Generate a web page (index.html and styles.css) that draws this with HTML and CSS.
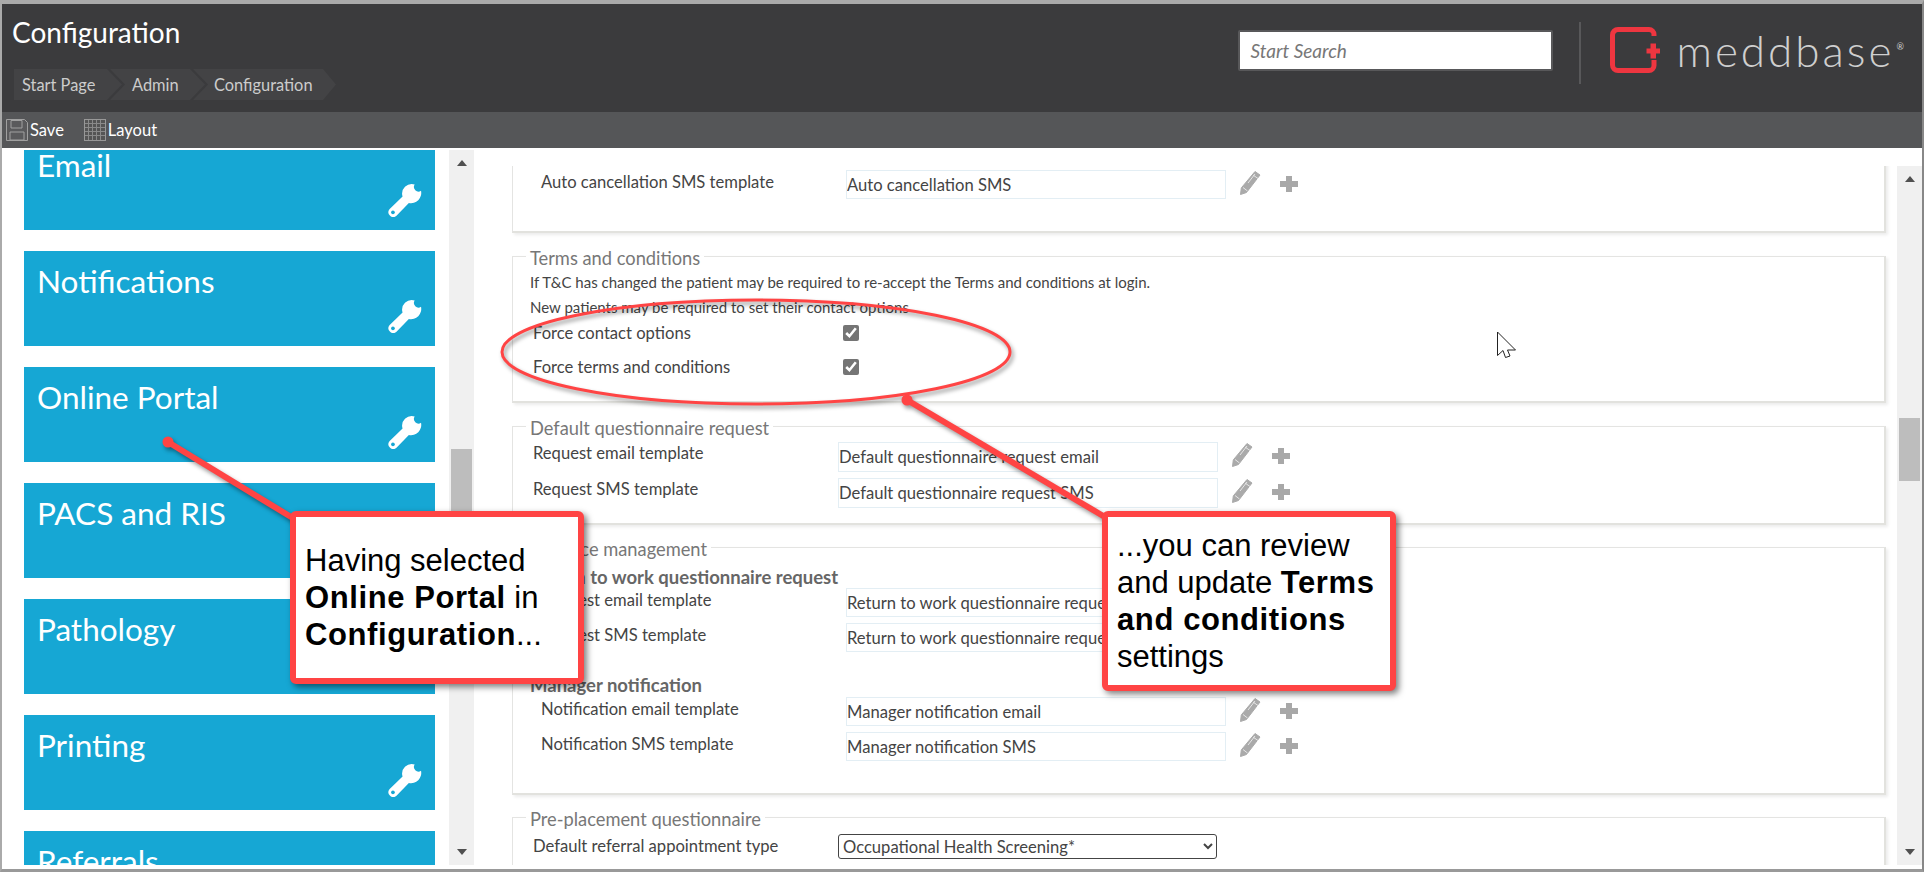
FILE: index.html
```html
<!DOCTYPE html>
<html lang="en">
<head>
<meta charset="utf-8">
<title>Configuration</title>
<link rel="stylesheet" href="styles.css">
</head>
<body>
<svg width="0" height="0" class="defs">
  <symbol id="wrench" viewBox="0 0 35 35">
    <path class="wr-shape" d="M28 1.500A10 10 0 0 0 15.500 14L2 27A5 5 0 0 0 9 34L22 20.500A10.500 10.500 0 0 0 34.500 8A4.700 4.700 0 0 1 28 1.500Z"/>
    <circle class="wr-hole" cx="5.600" cy="30.200" r="1.900"/>
  </symbol>
  <symbol id="pencil" viewBox="0 0 22 25">
    <path class="pn-shape" d="M16 1.500l5 3.500L7.500 22.500 1.500 24.500l.8-6.600z"/>
    <path class="pn-line" d="M14 5l5 3.500M4 17.500l4.500 3.500M9 13l7-9"/>
  </symbol>
  <symbol id="plus" viewBox="0 0 18 16">
    <path class="pl-shape" d="M6 0h6v5h6v6h-6v5H6v-5H0V5h6z"/>
  </symbol>
</svg>

<div class="frame">
  <header class="header">
    <div class="head-left">
      <h1 class="title">Configuration</h1>
      <nav class="crumbs">
        <span class="crumb crumb-first">Start Page</span>
        <span class="crumb crumb-admin">Admin</span>
        <span class="crumb crumb-config">Configuration</span>
      </nav>
    </div>
    <div class="head-right">
      <input class="search" type="text" placeholder="Start Search">
      <div class="divider"></div>
      <div class="logo">
        <svg class="logo-mark" width="50" height="46" viewBox="0 0 50 46">
          <path class="logo-stroke" d="M44 9V7.500A5 5 0 0 0 39 2.500H8A5.500 5.500 0 0 0 2.500 8V38A5.500 5.500 0 0 0 8 43.500H39A5 5 0 0 0 44 38.500V33"/>
          <path class="logo-plus" d="M40.500 16.500h5.500v5h4v5h-4v5h-5.500v-5h-4v-5h4z"/>
        </svg>
        <span class="logo-text">meddbase</span><span class="logo-reg">®</span>
      </div>
    </div>
  </header>

  <div class="toolbar">
    <button class="tool">
      <svg width="22" height="22" viewBox="0 0 22 22">
        <path class="ic-fill" d="M.5.5h18l3 3v18H.5z"/>
        <path class="ic-light" d="M5 1.500h11v7.500H5zM4 13h14v8H4z"/>
      </svg>
      <span>Save</span>
    </button>
    <button class="tool tool-layout">
      <svg width="22" height="22" viewBox="0 0 22 22">
        <rect class="ic-grid" x=".5" y=".5" width="21" height="21"/>
        <path class="ic-gridline" d="M4.500 1v20M8.500 1v20M12.500 1v20M16.500 1v20M1 4.500h20M1 8.500h20M1 12.500h20M1 16.500h20"/>
      </svg>
      <span>Layout</span>
    </button>
  </div>

  <main class="main">
    <section class="tiles-pane">
      <div class="tiles">
        <a class="tile"><span class="tile-name">Email</span><svg class="wrench"><use href="#wrench"/></svg></a>
        <a class="tile"><span class="tile-name">Notifications</span><svg class="wrench"><use href="#wrench"/></svg></a>
        <a class="tile"><span class="tile-name">Online Portal</span><svg class="wrench"><use href="#wrench"/></svg></a>
        <a class="tile"><span class="tile-name">PACS and RIS</span><svg class="wrench"><use href="#wrench"/></svg></a>
        <a class="tile"><span class="tile-name">Pathology</span><svg class="wrench"><use href="#wrench"/></svg></a>
        <a class="tile"><span class="tile-name">Printing</span><svg class="wrench"><use href="#wrench"/></svg></a>
        <a class="tile"><span class="tile-name">Referrals</span><svg class="wrench"><use href="#wrench"/></svg></a>
      </div>
    </section>
    <div class="scrollbar scrollbar-left">
      <i class="arrow-up"></i>
      <i class="thumb thumb-left"></i>
      <i class="arrow-down"></i>
    </div>

    <section class="form-pane">
      <fieldset class="fs fs-first">
        <div class="row row-in">
          <label class="lbl">Auto cancellation SMS template</label>
          <input class="inp" type="text" value="Auto cancellation SMS" readonly>
          <svg class="pencil"><use href="#pencil"/></svg>
          <svg class="plus"><use href="#plus"/></svg>
        </div>
      </fieldset>

      <fieldset class="fs fs-terms">
        <legend class="lgd">Terms and conditions</legend>
        <p class="note">If T&amp;C has changed the patient may be required to re-accept the Terms and conditions at login.</p>
        <p class="note">New patients may be required to set their contact options</p>
        <div class="row row-check">
          <label class="lbl">Force contact options</label>
          <input class="chk" type="checkbox" checked>
        </div>
        <div class="row row-check">
          <label class="lbl">Force terms and conditions</label>
          <input class="chk" type="checkbox" checked>
        </div>
      </fieldset>

      <fieldset class="fs fs-default">
        <legend class="lgd">Default questionnaire request</legend>
        <div class="row row-tall">
          <label class="lbl">Request email template</label>
          <input class="inp" type="text" value="Default questionnaire request email" readonly>
          <svg class="pencil"><use href="#pencil"/></svg>
          <svg class="plus"><use href="#plus"/></svg>
        </div>
        <div class="row row-tall">
          <label class="lbl">Request SMS template</label>
          <input class="inp" type="text" value="Default questionnaire request SMS" readonly>
          <svg class="pencil"><use href="#pencil"/></svg>
          <svg class="plus"><use href="#plus"/></svg>
        </div>
      </fieldset>

      <fieldset class="fs fs-absence">
        <legend class="lgd">Absence management</legend>
        <h4 class="sub">Return to work questionnaire request</h4>
        <div class="row row-in">
          <label class="lbl">Request email template</label>
          <input class="inp" type="text" value="Return to work questionnaire request email" readonly>
          <svg class="pencil"><use href="#pencil"/></svg>
          <svg class="plus"><use href="#plus"/></svg>
        </div>
        <div class="row row-in">
          <label class="lbl">Request SMS template</label>
          <input class="inp" type="text" value="Return to work questionnaire request SMS" readonly>
          <svg class="pencil"><use href="#pencil"/></svg>
          <svg class="plus"><use href="#plus"/></svg>
        </div>
        <h4 class="sub sub-second">Manager notification</h4>
        <div class="row row-in">
          <label class="lbl">Notification email template</label>
          <input class="inp" type="text" value="Manager notification email" readonly>
          <svg class="pencil"><use href="#pencil"/></svg>
          <svg class="plus"><use href="#plus"/></svg>
        </div>
        <div class="row row-in">
          <label class="lbl">Notification SMS template</label>
          <input class="inp" type="text" value="Manager notification SMS" readonly>
          <svg class="pencil"><use href="#pencil"/></svg>
          <svg class="plus"><use href="#plus"/></svg>
        </div>
      </fieldset>

      <fieldset class="fs fs-pre">
        <legend class="lgd">Pre-placement questionnaire</legend>
        <div class="row">
          <label class="lbl">Default referral appointment type</label>
          <select class="sel"><option>Occupational Health Screening*</option></select>
        </div>
      </fieldset>
    </section>

    <div class="scrollbar scrollbar-right">
      <i class="arrow-up"></i>
      <i class="thumb thumb-right"></i>
      <i class="arrow-down"></i>
    </div>
  </main>
</div>

<svg class="marks" width="1924" height="872" viewBox="0 0 1924 872">
  <g class="mark-group">
    <ellipse class="mark-ring" cx="756" cy="352" rx="254" ry="52"/>
    <path class="mark-line" d="M168 442L296 520"/>
    <circle class="mark-dot" cx="168" cy="442" r="5.500"/>
    <path class="mark-line" d="M907 400L1110 520"/>
    <circle class="mark-dot" cx="907" cy="400" r="5.500"/>
  </g>
</svg>
<svg class="cursor" width="20" height="28" viewBox="0 0 20 28">
  <path class="cursor-shape" d="M1.500 1V24.500L7 19.500L9.500 26.500L14 25L11.500 19H19.500Z"/>
</svg>
<div class="callout callout-left">Having selected<br><b>Online Portal</b> in<br><b>Configuration</b>...</div>
<div class="callout callout-right">...you can review<br>and update <b>Terms</b><br><b>and conditions</b><br>settings</div>
</body>
</html>
```

FILE: styles.css
```css
* { box-sizing: border-box; }
html, body { margin: 0; padding: 0; width: 1924px; height: 872px; overflow: hidden; background: #fff; }
body { font-family: Lato, "Open Sans", sans-serif; color: #444; position: relative; }
.defs { position: absolute; }

.frame {
  width: 1924px; height: 872px; display: flex; flex-direction: column;
  border-top: 4px solid #aaa; border-left: 2px solid #aaa; border-right: 2px solid #888;
  border-bottom: 3px solid #999; background: #fff;
}

/* header */
.header { height: 108px; flex: none; background: #3b3b3d; display: flex; justify-content: space-between; }
.head-left { padding: 0 0 0 10px; }
.title { margin: 13px 0 0 0; font-size: 28px; line-height: 30px; font-weight: 400; color: #fff; }
.crumbs { display: flex; margin: 22px 0 0 2px; height: 31px; }
.crumb { display: block; height: 31px; line-height: 31px; font-size: 16.400px; color: #ccc; background: #434345; }
.crumb-first { width: 108px; padding-left: 8px; clip-path: polygon(0 0, 93px 0, 100% 50%, 93px 100%, 0 100%); }
.crumb-admin { width: 95px; margin-left: -12px; padding-left: 22px; clip-path: polygon(0 0, 80px 0, 100% 50%, 80px 100%, 0 100%, 15px 50%); }
.crumb-config { width: 143px; margin-left: -12px; padding-left: 21px; clip-path: polygon(0 0, 130px 0, 100% 50%, 130px 100%, 0 100%, 15px 50%); }
.head-right { display: flex; align-items: flex-start; }
.search {
  width: 315px; height: 41px; margin-top: 26px; border: 2px solid #58585a; border-radius: 2px; padding: 0 10px;
  font: italic 19px Lato, sans-serif; background: #fff; outline: 0;
}
.search::placeholder { color: #777; opacity: 1; }
.divider { width: 2px; height: 62px; background: #58585a; margin: 18px 29px 0 26px; }
.logo { display: flex; align-items: flex-start; margin-top: 23px; margin-right: 18px; }
.logo-mark { display: block; flex: none; }
.logo-stroke { fill: none; stroke: #ee3640; stroke-width: 5; }
.logo-plus { fill: #ee3640; }
.logo-text { font-size: 44px; line-height: 40px; font-weight: 300; color: #cfcfcf; margin: 3px 0 0 16px; letter-spacing: 3px; white-space: nowrap; }
.logo-reg { font-size: 9px; line-height: 12px; color: #cfcfcf; margin: 14px 0 0 2px; }

/* toolbar */
.toolbar { height: 36px; flex: none; background: #555658; display: flex; align-items: center; padding-left: 4px; }
.tool { display: flex; align-items: center; gap: 2px; padding: 0; border: 0; background: none; color: #fff; font: 400 16.500px Lato, sans-serif; }
.tool-layout { margin-left: 20px; }
.ic-fill { fill: #5a5a5c; stroke: #a0a0a0; }
.ic-light { fill: none; stroke: #a0a0a0; }
.ic-grid { fill: #555; stroke: #989898; }
.ic-gridline { fill: none; stroke: #8a8a8a; stroke-width: 1; }

/* main */
.main { flex: 1; min-height: 0; display: flex; align-items: flex-start; }
.tiles-pane { width: 447px; height: 715px; margin-top: 2px; overflow: hidden; flex: none; }
.tiles { margin-top: -15px; padding-left: 22px; display: flex; flex-direction: column; gap: 21px; }
.tile { width: 411px; height: 95px; flex: none; background: #16a7d4; display: flex; flex-direction: column; padding: 12px 13px 13px 13px; }
.tile-name { font-size: 31.500px; line-height: 36px; color: #fff; }
.wrench { width: 35px; height: 35px; margin-top: auto; align-self: flex-end; display: block; }
.wr-shape { fill: #fff; }
.wr-hole { fill: #16a7d4; }

.scrollbar { width: 25px; flex: none; background: #f0f0f0; display: flex; flex-direction: column; align-items: center; }
.scrollbar-left { height: 715px; margin-top: 2px; }
.scrollbar-right { height: 699px; margin-top: 18px; margin-left: 5px; }
.arrow-up, .arrow-down { display: block; width: 0; height: 0; border-left: 5.500px solid transparent; border-right: 5.500px solid transparent; }
.arrow-up { border-bottom: 6px solid #505050; margin-top: 10px; }
.arrow-down { border-top: 6px solid #505050; margin-top: auto; margin-bottom: 10px; }
.thumb { display: block; width: 21px; background: #bdbdbd; }
.thumb-left { height: 62px; margin-top: 283px; }
.thumb-right { height: 63px; margin-top: 236px; }

/* form */
.form-pane { width: 1380px; height: 699px; margin: 18px 0 0 38px; overflow: hidden; flex: none; }
.fs {
  margin: 0; padding: 0; width: 1374px; min-width: 0; display: block;
  border: 1px solid #e4e4e2; border-bottom: 2px solid #e2e2de; border-right: 2px solid #e2e2de;
  box-shadow: 2px 2px 3px rgba(0,0,0,.08);
}
.fs-first { margin-top: -30px; padding: 33px 0 26px; }
.fs-terms { margin-top: 13px; padding-bottom: 13px; }
.fs-default { margin-top: 13px; padding: 0 0 9px; }
.fs-absence { margin-top: 12px; padding-bottom: 26px; }
.fs-pre { margin-top: 12px; padding-bottom: 20px; }
.lgd { margin-left: 13px; padding: 0 4px; height: 20px; font-size: 18.300px; line-height: 24px; color: #777; white-space: nowrap; }
.note { margin: 0 0 0 17px; height: 25px; line-height: 25px; font-size: 15px; color: #444; white-space: nowrap; }
.fs-terms .lgd { margin-bottom: 4px; }
.fs-default .lgd { margin-bottom: 6px; }
.row { display: flex; align-items: flex-start; height: 35px; margin-left: 20px; }
.row-in { margin-left: 28px; }
.row-tall { height: 36px; }
.row-check { height: 34px; }
.lbl { width: 305px; flex: none; font-size: 16.600px; line-height: 24px; color: #444; white-space: nowrap; }
.row-tall .lbl { line-height: 22px; }
.row-check .lbl { line-height: 26px; width: 310px; }
.inp {
  width: 380px; height: 29px; flex: none; padding: 0; border: 1px solid #e3eef4; background: #fff;
  font: 16.600px Lato, sans-serif; color: #444; outline: 0;
}
.row-tall .inp { height: 30px; }
.pencil { width: 22px; height: 25px; margin-left: 13px; flex: none; display: block; }
.plus { width: 18px; height: 16px; margin: 6px 0 0 19px; flex: none; display: block; }
.pn-shape { fill: #aaa; stroke: #aaa; stroke-width: 1; }
.pn-line { fill: none; stroke: #e6e6e6; stroke-width: 1; }
.pl-shape { fill: #a8a8a8; }
.chk { width: 16px; height: 16px; margin: 5px 0 0; accent-color: #757575; flex: none; }
.sub { margin: 9px 0 0 17px; height: 22px; line-height: 22px; font-size: 18.500px; font-weight: 700; color: #666; white-space: nowrap; }
.sub-second { margin-top: 16px; height: 23px; }
.sel {
  width: 379px; height: 25px; border: 1px solid #444; border-radius: 3px; background: #fff; padding: 0;
  font: 16.600px Lato, sans-serif; color: #444;
}
.fs-pre .row { margin-top: 7px; }

/* annotations */
.marks { position: absolute; left: 0; top: 0; pointer-events: none; }
.mark-group { filter: drop-shadow(2px 3px 2px rgba(0,0,0,.4)); }
.mark-ring { fill: none; stroke: #f44; stroke-width: 3; }
.mark-line { fill: none; stroke: #f44; stroke-width: 6; }
.mark-dot { fill: #f44; }
.cursor { position: absolute; left: 1496px; top: 331px; }
.cursor-shape { fill: #fff; stroke: #222; stroke-width: 1; }
.callout {
  position: absolute; background: #fff; border: 6px solid #f44; border-radius: 6px;
  box-shadow: 3px 3px 6px rgba(0,0,0,.5);
  font: 31px/37px "Liberation Sans", Arial, sans-serif; color: #000;
  white-space: nowrap;
}
.callout b { letter-spacing: .6px; }
.callout-left { left: 290px; top: 511px; width: 294px; height: 173px; padding: 25px 0 0 9px; }
.callout-right { left: 1102px; top: 511px; width: 294px; height: 180px; padding: 10px 0 0 9px; }
```
